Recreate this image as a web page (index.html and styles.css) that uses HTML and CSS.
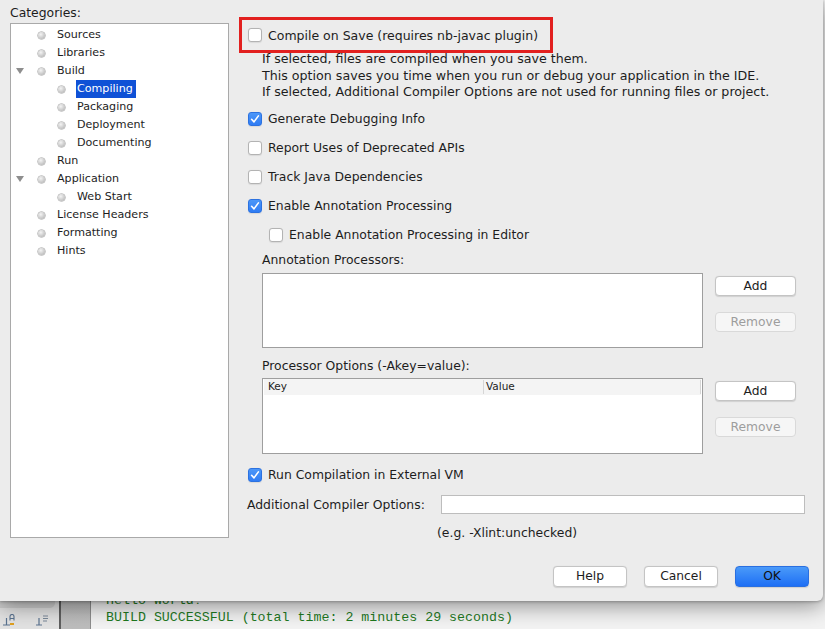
FILE: index.html
```html
<!DOCTYPE html>
<html>
<head>
<meta charset="utf-8">
<link rel="stylesheet" href="styles.css">
</head>
<body>
<div class="screen">
  <div class="ide">
    <div class="sidebar">
      <div class="side-tab"></div>
      <div class="side-tools">
        <svg class="tool" width="14" height="12" viewBox="0 0 14 12"><path d="M1 11h7M4.5 11V4" stroke="#5a7390" stroke-width="1.2" fill="none"/><path d="M8 6.5V2.5a2 2 0 0 1 4 0v4M8 4.5h4" stroke="#5a7390" stroke-width="1.1" fill="none"/><rect x="8" y="9" width="4" height="2" fill="#e0a020"/></svg>
        <svg class="tool" width="14" height="12" viewBox="0 0 14 12"><path d="M1 11h6M4 11V4" stroke="#5a7390" stroke-width="1.2" fill="none"/><path d="M8 2h5M8 4.5h5M8 7h4" stroke="#7a8898" stroke-width="1" fill="none"/></svg>
      </div>
    </div>
    <div class="split"></div>
    <div class="gutter"></div>
    <div class="output">
      <div class="out-line">Hello World!</div>
      <div class="out-line">BUILD SUCCESSFUL (total time: 2 minutes 29 seconds)</div>
    </div>
  </div>

  <div class="dialog">
    <div class="dialog-body">
      <div class="categories">
        <div class="cat-label">Categories:</div>
        <div class="tree">
          <div class="node"><span class="twisty"></span><span class="bullet"></span><span class="node-label">Sources</span></div>
          <div class="node"><span class="twisty"></span><span class="bullet"></span><span class="node-label">Libraries</span></div>
          <div class="node"><span class="twisty"><span class="tri"></span></span><span class="bullet"></span><span class="node-label">Build</span></div>
          <div class="node child"><span class="twisty"></span><span class="bullet"></span><span class="node-label selected">Compiling</span></div>
          <div class="node child"><span class="twisty"></span><span class="bullet"></span><span class="node-label">Packaging</span></div>
          <div class="node child"><span class="twisty"></span><span class="bullet"></span><span class="node-label">Deployment</span></div>
          <div class="node child"><span class="twisty"></span><span class="bullet"></span><span class="node-label">Documenting</span></div>
          <div class="node"><span class="twisty"></span><span class="bullet"></span><span class="node-label">Run</span></div>
          <div class="node"><span class="twisty"><span class="tri"></span></span><span class="bullet"></span><span class="node-label">Application</span></div>
          <div class="node child"><span class="twisty"></span><span class="bullet"></span><span class="node-label">Web Start</span></div>
          <div class="node"><span class="twisty"></span><span class="bullet"></span><span class="node-label">License Headers</span></div>
          <div class="node"><span class="twisty"></span><span class="bullet"></span><span class="node-label">Formatting</span></div>
          <div class="node"><span class="twisty"></span><span class="bullet"></span><span class="node-label">Hints</span></div>
        </div>
      </div>

      <div class="settings">
        <div class="highlight">
          <span class="cb"></span><span class="cb-text">Compile on Save (requires nb-javac plugin)</span>
        </div>
        <div class="desc">
          If selected, files are compiled when you save them.<br>
          This option saves you time when you run or debug your application in the IDE.<br>
          If selected, Additional Compiler Options are not used for running files or project.
        </div>
        <div class="checks">
          <div class="check-row"><span class="cb on"><svg width="14" height="14" viewBox="0 0 14 14"><path d="M3.6 7.3L6 9.9L10.4 3.9" stroke="#fff" stroke-width="1.6" fill="none" stroke-linecap="round" stroke-linejoin="round"/></svg></span><span class="cb-text">Generate Debugging Info</span></div>
          <div class="check-row"><span class="cb"></span><span class="cb-text">Report Uses of Deprecated APIs</span></div>
          <div class="check-row"><span class="cb"></span><span class="cb-text">Track Java Dependencies</span></div>
          <div class="check-row"><span class="cb on"><svg width="14" height="14" viewBox="0 0 14 14"><path d="M3.6 7.3L6 9.9L10.4 3.9" stroke="#fff" stroke-width="1.6" fill="none" stroke-linecap="round" stroke-linejoin="round"/></svg></span><span class="cb-text">Enable Annotation Processing</span></div>
          <div class="check-row nested"><span class="cb"></span><span class="cb-text">Enable Annotation Processing in Editor</span></div>
        </div>

        <div class="sub">
          <div class="sub-label first">Annotation Processors:</div>
          <div class="list-row">
            <div class="listbox"></div>
            <div class="side-buttons">
              <button class="btn">Add</button>
              <button class="btn disabled">Remove</button>
            </div>
          </div>
          <div class="sub-label second">Processor Options (-Akey=value):</div>
          <div class="list-row">
            <div class="listbox table">
              <div class="thead">
                <div class="th key">Key</div>
                <div class="th val">Value</div>
              </div>
            </div>
            <div class="side-buttons">
              <button class="btn">Add</button>
              <button class="btn disabled">Remove</button>
            </div>
          </div>
        </div>

        <div class="check-row external"><span class="cb on"><svg width="14" height="14" viewBox="0 0 14 14"><path d="M3.6 7.3L6 9.9L10.4 3.9" stroke="#fff" stroke-width="1.6" fill="none" stroke-linecap="round" stroke-linejoin="round"/></svg></span><span class="cb-text">Run Compilation in External VM</span></div>

        <div class="options-row">
          <span class="opt-label">Additional Compiler Options:</span>
          <span class="field"></span>
        </div>
        <div class="hint">(e.g. -Xlint:unchecked)</div>
      </div>
    </div>
    <div class="footer">
      <button class="btn big">Help</button>
      <button class="btn big">Cancel</button>
      <button class="btn big primary">OK</button>
    </div>
  </div>
</div>
</body>
</html>
```

FILE: styles.css
```css
* { box-sizing: border-box; }
html, body { margin: 0; padding: 0; }
body {
  font-family: "DejaVu Sans", "Noto Sans", sans-serif;
  color: #1d1d1d;
  background: #ececec;
}
.screen {
  position: relative;
  width: 825px;
  height: 629px;
  overflow: hidden;
}

/* ---------- IDE behind the dialog ---------- */
.ide {
  display: flex;
  height: 629px;
}
.sidebar {
  width: 59px;
  background: #e2e2e2;
  display: flex;
  flex-direction: column;
  justify-content: flex-end;
}
.side-tab {
  height: 8px;
  margin: 0 4px 6px 0;
  background: #cfcfcf;
  border-radius: 0 0 5px 0;
}
.side-tools {
  display: flex;
  gap: 19px;
  padding: 0 0 2px 2px;
  height: 15px;
}
.tool { display: block; }
.split {
  width: 2px;
  background: #5f5f5f;
}
.gutter {
  width: 30px;
  background: linear-gradient(#a9a9a9, #bdbdbd);
  border-right: 1px solid #8d8d8d;
}
.output {
  flex: 1;
  background: #f3f3f3;
  display: flex;
  flex-direction: column;
  justify-content: flex-end;
  padding: 0 0 3px 15px;
}
.out-line {
  font-family: "Liberation Mono", "DejaVu Sans Mono", monospace;
  font-size: 13.3px;
  line-height: 17px;
  color: #1f7a1f;
  white-space: nowrap;
}

/* ---------- Dialog ---------- */
.dialog {
  position: absolute;
  top: 0;
  left: 0;
  width: 823px;
  height: 601px;
  background: #ececec;
  border-bottom-right-radius: 6px;
  box-shadow: 0 5px 22px rgba(0, 0, 0, 0.42), 0 1px 3px rgba(0,0,0,0.25);
  display: flex;
  flex-direction: column;
}
.dialog-body {
  flex: 1;
  display: flex;
}

/* Categories */
.categories {
  width: 239px;
  padding-left: 10px;
  flex: none;
}
.cat-label {
  font-size: 12.4px;
  line-height: 16px;
  margin-top: 5px;
}
.tree {
  margin-top: 2px;
  width: 219px;
  height: 515px;
  background: #fff;
  border: 1px solid #a9a9a9;
  padding-top: 2px;
}
.node {
  display: flex;
  align-items: center;
  height: 18px;
  font-size: 11.1px;
}
.node.child { padding-left: 20px; }
.twisty {
  width: 27px;
  flex: none;
  padding-left: 5px;
  display: flex;
  align-items: center;
}
.tri {
  width: 0;
  height: 0;
  border-left: 4px solid transparent;
  border-right: 4px solid transparent;
  border-top: 6px solid #8e8e8e;
}
.bullet {
  width: 7px;
  height: 7px;
  flex: none;
  border-radius: 50%;
  background: radial-gradient(circle at 40% 35%, #f4f4f4 0, #c9c9c9 60%, #a8a8a8 100%);
  box-shadow: 0 0 0 0.5px #9a9a9a;
  margin-left: -0.5px;
}
.node-label {
  margin-left: 11.5px;
  padding: 0 3px 0 1px;
  line-height: 18px;
  white-space: nowrap;
}
.node-label.selected {
  background: #0f51d6;
  color: #fff;
}

/* Settings */
.settings {
  flex: 1;
  font-size: 12.4px;
}
.highlight {
  margin-top: 17px;
  width: 314px;
  height: 36px;
  border: 3px solid #e2201f;
  display: flex;
  align-items: center;
  padding-left: 6px;
  font-size: 12.5px;
}
.cb {
  width: 14px;
  height: 14px;
  flex: none;
  border-radius: 3px;
  background: #fff;
  border: 1px solid #b3b3b3;
  box-shadow: 0 0.5px 1px rgba(0,0,0,0.08);
  display: block;
}
.cb.on {
  background: linear-gradient(#4c97f8, #2f7cf4);
  border-color: #2c72e0;
}
.cb svg { display: block; margin: -1px; }
.cb-text {
  margin-left: 6px;
  white-space: nowrap;
}
.desc {
  margin-top: -2px;
  padding-left: 23px;
  line-height: 16.5px;
  font-size: 12.65px;
  white-space: nowrap;
}
.checks {
  margin-top: 8px;
  padding-left: 9px;
  display: flex;
  flex-direction: column;
  gap: 9px;
}
.check-row {
  display: flex;
  align-items: center;
  height: 20px;
}
.check-row.nested { padding-left: 21px; }

.sub { padding-left: 23px; }
.sub-label {
  line-height: 16px;
}
.sub-label.first { margin-top: 7px; margin-bottom: 5px; }
.sub-label.second { margin-top: 10px; margin-bottom: 4px; }
.list-row {
  display: flex;
  gap: 12px;
  align-items: flex-start;
}
.listbox {
  width: 441px;
  height: 75px;
  background: #fff;
  border: 1px solid #9e9e9e;
}
.listbox.table { height: 76px; padding: 0 1px 1px 1px; }
.thead {
  display: flex;
  height: 16px;
  background: #f4f4f4;
  font-size: 10.5px;
}
.th { padding-left: 4px; margin: 1px 0; line-height: 13px; }
.th.key { width: 220px; border-right: 1px solid #d6d6d6; }
.th.val { flex: 1; border-right: 1px solid #d6d6d6; padding-left: 2px; }
.side-buttons {
  display: flex;
  flex-direction: column;
  gap: 16px;
  padding-top: 3px;
}
.btn {
  font-family: "DejaVu Sans", "Noto Sans", sans-serif;
  font-size: 12.3px;
  color: #1d1d1d;
  width: 81px;
  height: 20px;
  padding: 0;
  background: #fff;
  border: 1px solid #c4c4c4;
  border-radius: 4px;
  box-shadow: 0 0.5px 1px rgba(0,0,0,0.12);
  line-height: 18px;
}
.btn.disabled {
  background: #f6f6f6;
  color: #9d9d9d;
  border-color: #d9d9d9;
  box-shadow: none;
}

.check-row.external {
  margin-top: 11px;
  padding-left: 9px;
}
.options-row {
  margin-top: 10px;
  padding-left: 8px;
  display: flex;
  align-items: center;
  height: 19px;
}
.opt-label {
  white-space: nowrap;
  width: 194px;
  flex: none;
}
.field {
  width: 364px;
  height: 19px;
  background: #fff;
  border: 1px solid #bdbdbd;
}
.hint {
  margin-top: 11px;
  padding-left: 198px;
  line-height: 16px;
}

.footer {
  display: flex;
  justify-content: flex-end;
  gap: 17px;
  padding: 0 14px 14px 0;
}
.btn.big {
  width: 74px;
  height: 21px;
  line-height: 19px;
}
.btn.primary {
  background: linear-gradient(#4a9af9, #1e6ff5);
  border-color: #2a6fe0;
  color: #111;
}
```
